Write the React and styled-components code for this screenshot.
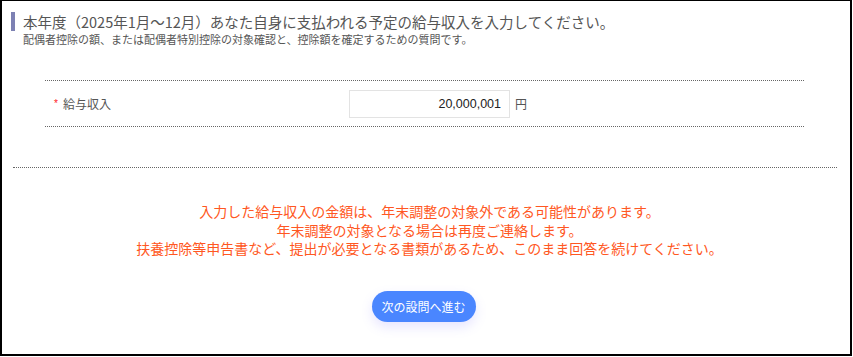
import React from 'react'
import styled, { createGlobalStyle } from 'styled-components'

const GlobalStyle = createGlobalStyle`
    html, body {
        margin: 0;
        padding: 0;
        background: #fff;
    }
    body {
        font-family: "Noto Sans CJK JP", "Noto Sans", sans-serif;
    }
`;

const Frame = styled.div`
    box-sizing: border-box;
    width: 852px;
    height: 356px;
    border: 2px solid #000;
    border-top-width: 1px;
    padding: 11px 0 0 9px;
    .question-head {
        .title {
            border-left: 4px solid #7d81b3;
            padding-left: 8px;
            font-size: 14.5px;
            line-height: 19px;
            color: #555;
        }
        .sub {
            margin: 1px 0 0 12px;
            font-size: 11px;
            line-height: 15px;
            color: #555;
        }
    }
`;

const FormBlock = styled.div`
    margin: 33px 46px 0 34px;
    border-top: 1px dotted #666;
    border-bottom: 1px dotted #666;
    height: 45px;
    display: flex;
    align-items: center;
    padding-left: 9px;
`;

const Label = styled.div`
    width: 295px;
    display: flex;
    align-items: center;
    gap: 5px;
    font-size: 12px;
    color: #555;
    .req {
        color: #ff1a1a;
        font-size: 10px;
        font-family: "Liberation Sans", sans-serif;
    }
`;

const AmountInput = styled.div`
    box-sizing: border-box;
    width: 161px;
    height: 28px;
    border: 1px solid #e3e3e3;
    display: flex;
    align-items: center;
    justify-content: flex-end;
    padding-right: 8px;
    font-family: "Liberation Sans", Arial, sans-serif;
    font-size: 12.5px;
    color: #222;
`;

const Unit = styled.span`
    margin-left: 5px;
    font-size: 12px;
    color: #555;
`;

const Divider = styled.div`
    margin: 40px 13px 0 2px;
    border-top: 1px dotted #666;
`;

const Notice = styled.div`
    margin-top: 34px;
    text-align: center;
    color: #ff5722;
    font-size: 14px;
    line-height: 18.5px;
    padding-right: 2px;
`;

const NextButton = styled.button`
    display: block;
    margin: 33px auto 0;
    position: relative;
    left: -7px;
    width: 104px;
    height: 31px;
    border: none;
    border-radius: 16px;
    background: #4a86ff;
    color: #fff;
    font-family: "Noto Sans CJK JP", sans-serif;
    font-size: 12px;
    box-shadow: 0 5px 12px rgba(120, 110, 255, 0.18);
    cursor: pointer;
`;

const App = () => {
    return (
        <>
            <GlobalStyle />
            <Frame>
                <div className="question-head">
                    <div className="title">
                        本年度（2025年1月～12月）あなた自身に支払われる予定の給与収入を入力してください。
                    </div>
                    <div className="sub">
                        配偶者控除の額、または配偶者特別控除の対象確認と、控除額を確定するための質問です。
                    </div>
                </div>
                <FormBlock>
                    <Label>
                        <span className="req">*</span>
                        <span>給与収入</span>
                    </Label>
                    <AmountInput>20,000,001</AmountInput>
                    <Unit>円</Unit>
                </FormBlock>
                <Divider />
                <Notice>
                    入力した給与収入の金額は、年末調整の対象外である可能性があります。<br />
                    年末調整の対象となる場合は再度ご連絡します。<br />
                    扶養控除等申告書など、提出が必要となる書類があるため、このまま回答を続けてください。
                </Notice>
                <NextButton>次の設問へ進む</NextButton>
            </Frame>
        </>
    )
}

export default App;
